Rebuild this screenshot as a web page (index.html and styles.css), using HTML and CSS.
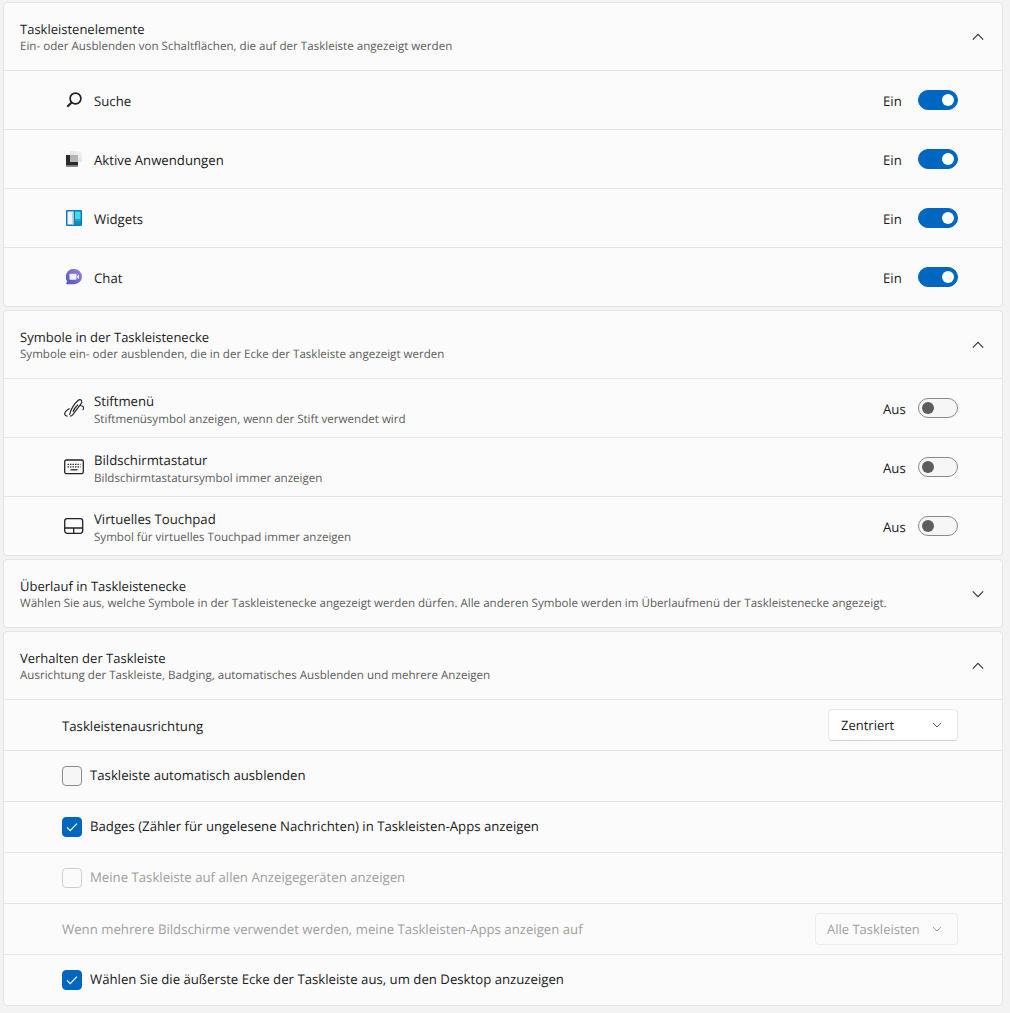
FILE: index.html
```html
<!DOCTYPE html>
<html lang="de">
<head>
<meta charset="utf-8">
<title>Taskleiste</title>
<link rel="stylesheet" href="styles.css">
</head>
<body>
<svg class="defs" width="0" height="0" aria-hidden="true">
  <defs>
    <symbol id="up" viewBox="0 0 12 8"><path d="M.8 6.600 6 1.400l5.200 5.200" fill="none" stroke="#333" stroke-width="1.100"/></symbol>
    <symbol id="down" viewBox="0 0 12 8"><path d="M.8 1.400 6 6.600l5.200-5.200" fill="none" stroke="#333" stroke-width="1.100"/></symbol>
    <symbol id="small-down" viewBox="0 0 10 6"><path d="M1 1l4 4 4-4" fill="none" stroke="currentColor" stroke-width="1"/></symbol>
    <symbol id="check" viewBox="0 0 12 10"><path d="M1 5.400 4.200 8.600 11 1.600" fill="none" stroke="#fff" stroke-width="1.200"/></symbol>
  </defs>
</svg>
<main class="page">
  <section class="card">
    <header class="head">
      <div class="htext"><h2 class="title">Taskleistenelemente</h2><p class="sub">Ein- oder Ausblenden von Schaltflächen, die auf der Taskleiste angezeigt werden</p></div>
      <svg class="chev"><use href="#up"/></svg>
    </header>
    <div class="row icon-row">
      <svg class="ico" viewBox="0 0 16 16"><circle cx="9.500" cy="6.500" r="5.400" fill="none" stroke="#222" stroke-width="1.700"/><path d="M5.600 10.400 1.300 14.700" stroke="#222" stroke-width="2.100"/></svg>
      <span class="label">Suche</span>
      <span class="state">Ein</span><span class="toggle on"></span>
    </div>
    <div class="row icon-row">
      <svg class="ico" viewBox="0 0 16 16"><defs><linearGradient id="win" x1="0" y1="1" x2="1" y2="0"><stop offset="0" stop-color="#d8d8d8"/><stop offset="1" stop-color="#f6f6f6"/></linearGradient></defs><rect x="4" y="0" width="12" height="11" fill="url(#win)"/><rect x="0" y="4" width="12" height="11.500" fill="#2b2b2b"/><rect x="0" y="14.200" width="12" height="1.300" fill="#8a8a8a"/><rect x="4" y="4" width="8" height="7" fill="#b5b5b5"/></svg>
      <span class="label">Aktive Anwendungen</span>
      <span class="state">Ein</span><span class="toggle on"></span>
    </div>
    <div class="row icon-row">
      <svg class="ico" viewBox="0 0 16 16"><rect width="16" height="16" rx="1" fill="#0f78c8"/><rect x="1.500" y="1.500" width="6" height="13" fill="#f1f4f8"/><rect x="6" y="1.500" width="1.500" height="13" fill="#c9d3de"/><rect x="9" y="1.500" width="5.500" height="7.500" fill="#3fdbe6"/><rect x="9" y="9" width="5.500" height="2.600" fill="#22a8c4"/><rect x="9" y="11.600" width="5.500" height="2.900" fill="#1190b0"/></svg>
      <span class="label">Widgets</span>
      <span class="state">Ein</span><span class="toggle on"></span>
    </div>
    <div class="row icon-row">
      <svg class="ico" viewBox="0 0 16 16"><defs><linearGradient id="chat" x1="1" y1="0" x2="0" y2="1"><stop offset="0" stop-color="#9a86e0"/><stop offset="1" stop-color="#4b53c8"/></linearGradient></defs><path d="M8.200 0A7.800 7.800 0 0 1 16 7.800a7.800 7.800 0 0 1-7.800 7.400H1.200c-.8 0-1.200-.7-.8-1.300l.8-1.600A7.800 7.800 0 0 1 8.200 0z" fill="url(#chat)"/><rect x="3.500" y="4.800" width="7" height="6" rx=".8" fill="#f3f1fb"/><path d="M11.200 7l1.800-1.400v4.500l-1.800-1.300z" fill="#f3f1fb"/></svg>
      <span class="label">Chat</span>
      <span class="state">Ein</span><span class="toggle on"></span>
    </div>
  </section>

  <section class="card">
    <header class="head">
      <div class="htext"><h2 class="title">Symbole in der Taskleistenecke</h2><p class="sub">Symbole ein- oder ausblenden, die in der Ecke der Taskleiste angezeigt werden</p></div>
      <svg class="chev"><use href="#up"/></svg>
    </header>
    <div class="row icon-row">
      <svg class="ico wide" viewBox="0 0 20 20" fill="none" stroke="#222" stroke-width="1.150"><path d="M5.500 16.800C6.600 12.500 10 6 14.300 2.300c1.200-1 2.800-.8 3.300.4.500 1.100.1 2.400-.8 3.500L8.800 16.600c-.9 1.100-2 1.600-2.800 1.300"/><path d="M9 13.800c.8-2.500 2.600-5 5-7"/><path d="M5.600 10.600C2 12.800 0 15 .9 16.800c.5 1 1.500 1.400 2.700 1.400M15.800 7.200c2.300.5 4.100 1.600 3.900 3.100-.1.700-.5 1.200-1.100 1.600"/></svg>
      <div class="stack"><span class="label">Stiftmenü</span><span class="sub">Stiftmenüsymbol anzeigen, wenn der Stift verwendet wird</span></div>
      <span class="state">Aus</span><span class="toggle"></span>
    </div>
    <div class="row icon-row">
      <svg class="ico wide" viewBox="0 0 20 20" fill="none" stroke="#222" stroke-width="1.300"><rect x=".7" y="3" width="18.600" height="13.600" rx="1.500"/><path d="M3.500 7.300h13M3.500 9.800h13" stroke-dasharray="1.400 1.100" stroke-width="1.200"/><path d="M6.500 12.800h7" stroke-width="1.300"/></svg>
      <div class="stack"><span class="label">Bildschirmtastatur</span><span class="sub">Bildschirmtastatursymbol immer anzeigen</span></div>
      <span class="state">Aus</span><span class="toggle"></span>
    </div>
    <div class="row icon-row">
      <svg class="ico wide" viewBox="0 0 20 20" fill="none" stroke="#222" stroke-width="1.300"><rect x=".7" y="2.700" width="18" height="14.600" rx="2.500"/><path d="M.7 12h18M9.700 12v5.300"/></svg>
      <div class="stack"><span class="label">Virtuelles Touchpad</span><span class="sub">Symbol für virtuelles Touchpad immer anzeigen</span></div>
      <span class="state">Aus</span><span class="toggle"></span>
    </div>
  </section>

  <section class="card">
    <header class="head">
      <div class="htext"><h2 class="title">Überlauf in Taskleistenecke</h2><p class="sub">Wählen Sie aus, welche Symbole in der Taskleistenecke angezeigt werden dürfen. Alle anderen Symbole werden im Überlaufmenü der Taskleistenecke angezeigt.</p></div>
      <svg class="chev"><use href="#down"/></svg>
    </header>
  </section>

  <section class="card">
    <header class="head">
      <div class="htext"><h2 class="title">Verhalten der Taskleiste</h2><p class="sub">Ausrichtung der Taskleiste, Badging, automatisches Ausblenden und mehrere Anzeigen</p></div>
      <svg class="chev"><use href="#up"/></svg>
    </header>
    <div class="row short">
      <span class="label grow lower">Taskleistenausrichtung</span>
      <span class="select"><span>Zentriert</span><svg class="caret"><use href="#small-down"/></svg></span>
    </div>
    <div class="row short">
      <span class="box"></span><span class="label grow">Taskleiste automatisch ausblenden</span>
    </div>
    <div class="row short">
      <span class="box checked"><svg class="tick"><use href="#check"/></svg></span><span class="label grow">Badges (Zähler für ungelesene Nachrichten) in Taskleisten-Apps anzeigen</span>
    </div>
    <div class="row short">
      <span class="box disabled"></span><span class="label grow muted">Meine Taskleiste auf allen Anzeigegeräten anzeigen</span>
    </div>
    <div class="row short">
      <span class="label grow muted">Wenn mehrere Bildschirme verwendet werden, meine Taskleisten-Apps anzeigen auf</span>
      <span class="select off"><span>Alle Taskleisten</span><svg class="caret"><use href="#small-down"/></svg></span>
    </div>
    <div class="row short">
      <span class="box checked"><svg class="tick"><use href="#check"/></svg></span><span class="label grow">Wählen Sie die äußerste Ecke der Taskleiste aus, um den Desktop anzuzeigen</span>
    </div>
  </section>
</main>
</body>
</html>
```
FILE: styles.css
```css
* { box-sizing: border-box; }
html, body { margin: 0; height: 1013px; overflow: hidden; }
body {
  background: #f3f3f3;
  color: #1b1b1b;
  font-family: "Open Sans", "Noto Sans", sans-serif;
  font-size: 13px;
  text-rendering: geometricPrecision;
}
.defs { position: absolute; }
.page {
  display: flex;
  flex-direction: column;
  gap: 3px;
  padding: 2px 7px 0 3px;
}
.card {
  background: #fbfbfb;
  border: 1px solid #e5e5e5;
  border-radius: 4px;
}
.head {
  height: 67px;
  display: flex;
  align-items: center;
  justify-content: space-between;
  padding: 0 18px 0 16px;
}
.htext { padding-top: 3px; }
.card > .row { border-top: 1px solid #e5e5e5; }
.title {
  margin: 0 0 1px;
  font-size: 13px;
  font-weight: 400;
  line-height: 17px;
}
.sub {
  margin: 0;
  font-size: 11.58px;
  line-height: 16px;
  color: #5d5d5d;
}
.chev { width: 12px; height: 8px; flex: none; }
.row {
  display: flex;
  align-items: center;
  padding: 0 44px 0 58px;
}
.icon-row { height: 59px; padding-left: 62px; }
.short { height: 51px; }
.ico { width: 16px; height: 16px; flex: none; margin-right: 12px; }
.ico.wide { width: 20px; height: 20px; margin: 0 10px 0 -2px; }
.stack { display: flex; flex-direction: column; flex: 1; padding-top: 4px; }
.stack .label { line-height: 17px; margin-bottom: 2px; padding: 0; }
.label { font-size: 13.2px; }
.icon-row > .label { flex: 1; padding-top: 2px; }
.grow { flex: 1; }
.box + .label { padding-bottom: 2px; }
.lower { padding-top: 2px; }
.muted { color: #a0a0a0; }
.state { width: 35px; font-size: 13.2px; flex: none; padding-top: 2px; }
.toggle {
  position: relative;
  width: 40px;
  height: 20px;
  flex: none;
  border-radius: 10px;
  border: 1px solid #8a8a8a;
  background: #f6f6f6;
}
.toggle::after {
  content: "";
  position: absolute;
  left: 3px;
  top: 3px;
  width: 12px;
  height: 12px;
  border-radius: 50%;
  background: #5d5d5d;
}
.toggle.on { background: #0067c0; border-color: #0067c0; }
.toggle.on::after { left: auto; right: 3px; background: #fff; }
.select {
  width: 130px;
  height: 32px;
  flex: none;
  display: flex;
  align-items: center;
  justify-content: space-between;
  padding: 0 15px 0 12px;
  background: #fff;
  border: 1px solid #e8e8e8;
  border-bottom-color: #d0d0d0;
  border-radius: 4px;
  color: #1b1b1b;
}
.select.off {
  width: 143px;
  padding-left: 11px;
  background: #fbfbfb;
  border-color: #ececec;
  color: #a0a0a0;
}
.caret { width: 10px; height: 6px; color: #5d5d5d; }
.select.off .caret { color: #a0a0a0; }
.box {
  width: 20px;
  height: 20px;
  flex: none;
  margin-right: 8px;
  display: flex;
  align-items: center;
  justify-content: center;
  border: 1px solid #8a8a8a;
  border-radius: 4px;
  background: #f6f6f6;
}
.box.checked { background: #0067c0; border-color: #0067c0; }
.box.disabled { background: #fbfbfb; border-color: #cfcfcf; }
.tick { width: 12px; height: 10px; }
```
